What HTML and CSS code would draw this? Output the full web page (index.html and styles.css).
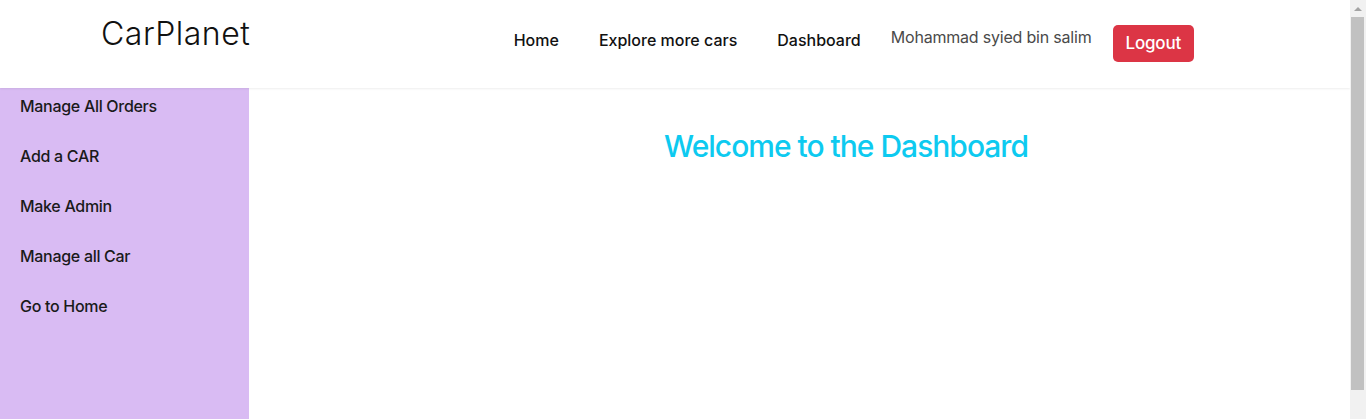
FILE: index.html
```html
<!DOCTYPE html>
<html lang="en">
<head>
<meta charset="utf-8">
<title>CarPlanet Dashboard</title>
<link rel="stylesheet" href="styles.css">
</head>
<body>
<header class="topbar">
  <a class="brand" href="#">CarPlanet</a>
  <nav class="nav">
    <a class="nav-link" href="#">Home</a>
    <a class="nav-link" href="#">Explore more cars</a>
    <a class="nav-link" href="#">Dashboard</a>
    <span class="user-name">Mohammad syied bin salim</span>
    <button class="btn-logout" type="button">Logout</button>
  </nav>
</header>
<div class="layout">
  <aside class="sidebar">
    <a class="side-link" href="#">Manage All Orders</a>
    <a class="side-link" href="#">Add a CAR</a>
    <a class="side-link" href="#">Make Admin</a>
    <a class="side-link" href="#">Manage all Car</a>
    <a class="side-link" href="#">Go to Home</a>
  </aside>
  <main class="content">
    <h1 class="welcome">Welcome to the Dashboard</h1>
  </main>
</div>
<div class="fake-scrollbar" aria-hidden="true">
  <div class="sb-arrow"></div>
  <div class="sb-thumb"></div>
</div>
</body>
</html>
```
FILE: styles.css
```css
* { box-sizing: border-box; }
html, body { margin: 0; padding: 0; }
body {
  font-family: "Inter", "Liberation Sans", sans-serif;
  color: #212529;
  background: #fff;
  margin-right: 16px;
}
a { text-decoration: none; color: inherit; }

.topbar {
  height: 88px;
  display: flex;
  align-items: flex-start;
  justify-content: space-between;
  padding-left: 101px;
  padding-right: 156px;
  background: #fff;
  box-shadow: 0 1px 2px rgba(0,0,0,0.07);
  position: relative;
  z-index: 1;
}
.brand {
  margin-top: 18px;
  font-size: 32px;
  line-height: 32px;
  font-weight: 300;
  color: #111;
  letter-spacing: 0.5px;
}
.nav {
  display: flex;
  align-items: flex-start;
}
.nav-link {
  margin-top: 28px;
  font-size: 16px;
  line-height: 24px;
  font-weight: 500;
  color: #111;
  margin-left: 40px;
  letter-spacing: 0;
}
.nav-link:first-child { margin-left: 0; }
.user-name {
  margin-top: 25px;
  margin-left: 30px;
  font-size: 16px;
  line-height: 24px;
  font-weight: 400;
  color: #4a4a4a;
  letter-spacing: -0.2px;
}
.btn-logout {
  margin-top: 25px;
  margin-left: 21px;
  height: 37px;
  padding: 0 13px;
  border: none;
  border-radius: 5px;
  background: #dc3545;
  color: #fff;
  font-family: inherit;
  font-size: 17px;
  font-weight: 500;
  line-height: 37px;
  letter-spacing: -0.2px;
}

.layout {
  display: flex;
  min-height: 344px;
}
.sidebar {
  width: 249px;
  flex: 0 0 249px;
  background: #d9bbf3;
  padding-top: 6px;
  display: flex;
  flex-direction: column;
  gap: 26px;
}
.side-link {
  padding-left: 20px;
  font-size: 16px;
  line-height: 24px;
  font-weight: 500;
  color: #1a1a1a;
  letter-spacing: -0.3px;
}
.content {
  flex: 1;
  padding-left: 93px;
}
.welcome {
  margin: 40px 0 0;
  text-align: center;
  font-size: 30px;
  line-height: 36px;
  font-weight: 500;
  color: #0dcaf0;
  letter-spacing: -1px;
}

.fake-scrollbar {
  position: fixed;
  top: 0;
  right: 0;
  width: 16px;
  height: 100vh;
  background: #f1f1f1;
  z-index: 10;
}
.sb-arrow {
  position: absolute;
  top: 7px;
  left: 4px;
  width: 0;
  height: 0;
  border-left: 4px solid transparent;
  border-right: 4px solid transparent;
  border-bottom: 4px solid #a3a3a3;
}
.sb-thumb {
  position: absolute;
  top: 17px;
  left: 1px;
  width: 13px;
  height: 373px;
  background: #c1c1c1;
}
```
